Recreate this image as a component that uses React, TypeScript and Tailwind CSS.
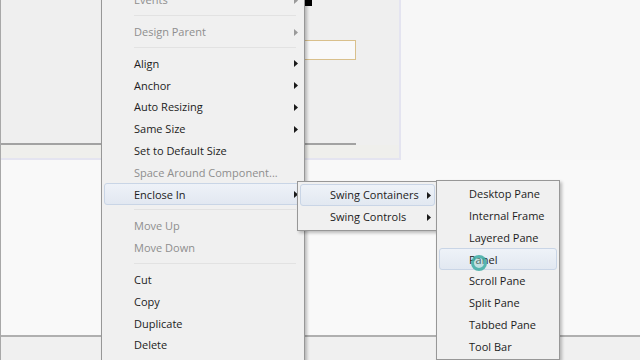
import React from "react";

type Item = { label?: string; sep?: boolean; disabled?: boolean; sub?: boolean; active?: boolean };

const mainItems: Item[] = [
  { label: "Events", disabled: true, sub: true },
  { sep: true },
  { label: "Design Parent", disabled: true, sub: true },
  { sep: true },
  { label: "Align", sub: true },
  { label: "Anchor", sub: true },
  { label: "Auto Resizing", sub: true },
  { label: "Same Size", sub: true },
  { label: "Set to Default Size" },
  { label: "Space Around Component...", disabled: true },
  { label: "Enclose In", sub: true, active: true },
  { sep: true },
  { label: "Move Up", disabled: true },
  { label: "Move Down", disabled: true },
  { sep: true },
  { label: "Cut" },
  { label: "Copy" },
  { label: "Duplicate" },
  { label: "Delete" },
];

const swingItems: Item[] = [
  { label: "Swing Containers", sub: true, active: true },
  { label: "Swing Controls", sub: true },
];

const containerItems: Item[] = [
  { label: "Desktop Pane" },
  { label: "Internal Frame" },
  { label: "Layered Pane" },
  { label: "Panel", active: true },
  { label: "Scroll Pane" },
  { label: "Split Pane" },
  { label: "Tabbed Pane" },
  { label: "Tool Bar" },
];

function Arrow({ disabled }: { disabled?: boolean }) {
  return (
    <svg width="4" height="7" viewBox="0 0 4 7" className="shrink-0">
      <path d="M0 0L4 3.5L0 7z" fill={disabled ? "#9a9a9a" : "#1a1a1a"} />
    </svg>
  );
}

function Menu({ items, textLeft }: { items: Item[]; textLeft: string }) {
  return (
    <div className="flex flex-col p-[2px]">
      {items.map((it, i) =>
        it.sep ? (
          <div key={i} className="h-[10px] flex items-center pl-[30px] pr-[6px]">
            <div className="w-full h-[2px] border-t border-[#e2e2e2] border-b-white" />
          </div>
        ) : (
          <div
            key={i}
            className={
              "h-[21.8px] flex items-center pr-[3px] pt-[1px] rounded-[3px] border " +
              (it.active
                ? "bg-gradient-to-b from-[#eef2f8] to-[#e2e8f1] border-[#c9d5e6]"
                : "border-transparent") +
              " " +
              (it.disabled ? "text-[#8e8e8e]" : "text-[#1c1c1c]")
            }
          >
            <span className={textLeft + " flex-1 whitespace-nowrap"}>{it.label}</span>
            {it.sub && <Arrow disabled={it.disabled} />}
          </div>
        )
      )}
    </div>
  );
}

export default function App() {
  return (
    <div
      className="relative w-[640px] h-[360px] overflow-hidden bg-[#f7f7f7] flex flex-col border-l border-[#a8a8a8] text-[11px]"
      style={{ fontFamily: '"Open Sans", "Noto Sans", sans-serif' }}
    >
      <div className="h-[160px] w-[400px] bg-[#efefef] border-r-2 border-b-2 border-[#e4e4f0] flex flex-col">
        <div className="ml-[303px] w-[8px] h-[6px] bg-black" />
        <div className="ml-[303px] mt-[34px] w-[52px] h-[20px] border border-[#d9c08c] bg-[#f9f9f9]" />
        <div className="mt-auto w-[355px] h-[2px] bg-[#a2a2a2]" />
        <div className="h-[13px] bg-[#efefec]" />
      </div>
      <div className="flex-1 bg-[#f9f9f9]" />
      <div className="h-[25px] border-t-2 border-[#b0b0b0] bg-[#f0f0f0]" />

      {/* main context menu */}
      <div className="absolute left-[100px] top-[-14px] w-[204px] pb-[12px] bg-[#f0f0f0] border border-[#979797] shadow-[2px_2px_3px_rgba(0,0,0,0.25)]">
        <Menu items={mainItems} textLeft="pl-[29px]" />
      </div>

      {/* swing submenu */}
      <div className="absolute left-[296px] top-[181px] w-[141px] bg-[#f0f0f0] border border-[#979797] shadow-[2px_2px_3px_rgba(0,0,0,0.25)]">
        <Menu items={swingItems} textLeft="pl-[29px]" />
      </div>

      {/* containers submenu */}
      <div className="absolute left-[435px] top-[180px] w-[124px] bg-[#f0f0f0] border border-[#979797] shadow-[2px_2px_3px_rgba(0,0,0,0.25)]">
        <Menu items={containerItems} textLeft="pl-[29px]" />
      </div>

      {/* cursor click ring */}
      <div className="absolute left-[470px] top-[255px] w-[16px] h-[16px] rounded-full border-[3px] border-[#3aa9a1]/80 bg-[#8fd3cc]/40" />
    </div>
  );
}
